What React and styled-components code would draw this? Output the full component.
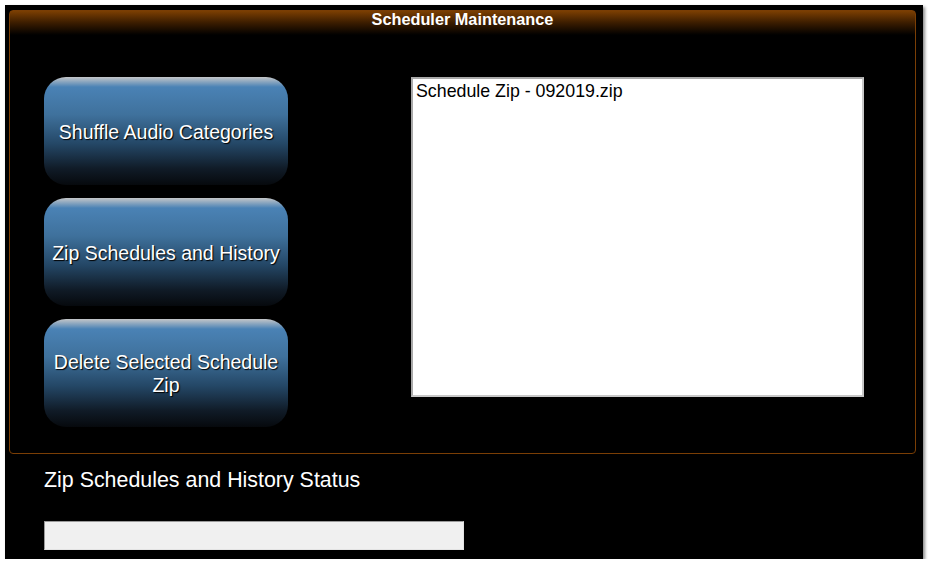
import styled, { createGlobalStyle } from 'styled-components';

const GlobalStyle = createGlobalStyle`
  html, body {
    margin: 0;
    padding: 0;
    background: #ffffff;
    font-family: "Liberation Sans", Arial, sans-serif;
  }
`;

const Window = styled.div`
  margin: 5px 0 0 5px;
  width: 918px;
  height: 554px;
  background: #000;
  box-shadow: 2px 2px 3px rgba(0, 0, 0, 0.45);
  display: flex;
  flex-direction: column;
`;

const GroupBox = styled.section`
  margin: 5px 0 0 4px;
  width: 907px;
  height: 444px;
  box-sizing: border-box;
  border: 1px solid #7a3e05;
  border-radius: 4px;
  background: linear-gradient(#7c3f02 0px, #3a1c00 12px, #000 24px);
  display: flex;
  flex-direction: column;
`;

const Title = styled.h1`
  margin: 0;
  height: 18px;
  text-align: center;
  color: #fff;
  font-size: 16.3px;
  font-weight: bold;
  line-height: 17px;
`;

const Body = styled.div`
  display: flex;
  padding: 48px 0 0 34px;
`;

const ButtonColumn = styled.div`
  display: flex;
  flex-direction: column;
  gap: 13px;
  width: 244px;
`;

const ActionButton = styled.button`
  width: 244px;
  height: 108px;
  border: none;
  border-radius: 22px;
  padding: 2px 4px 0;
  background: linear-gradient(
    #c4c6c8 0px,
    #4a82b5 10px,
    #3f719c 35%,
    #244766 62%,
    #101b27 85%,
    #06090d 100%
  );
  color: #fff;
  font-family: "Liberation Sans", Arial, sans-serif;
  font-size: 19.5px;
  line-height: 23px;
  text-shadow: 1px 1px 1px #000;
  cursor: pointer;
`;

const ListBox = styled.ul`
  list-style: none;
  margin: 0 0 0 123px;
  padding: 1px 3px;
  width: 453px;
  height: 320px;
  box-sizing: border-box;
  background: #fff;
  border: 2px solid #a9a9a9;
  border-right-color: #c8c8c8;
  border-bottom-color: #c8c8c8;
`;

const ListItem = styled.li`
  color: #000;
  font-size: 17.8px;
  line-height: 22px;
`;

const StatusArea = styled.div`
  padding: 14px 0 0 39px;
  display: flex;
  flex-direction: column;
`;

const StatusLabel = styled.div`
  color: #fff;
  font-size: 21.4px;
  line-height: 24px;
`;

const StatusBox = styled.div`
  margin-top: 29px;
  width: 420px;
  height: 29px;
  box-sizing: border-box;
  background: #f0f0f0;
  border: 1px solid #9a9a9a;
  border-right-color: #e3e3e3;
  border-bottom-color: #e3e3e3;
`;

const buttons = [
  'Shuffle Audio Categories',
  'Zip Schedules and History',
  'Delete Selected Schedule Zip',
];

const App = () => {
  return (
    <>
      <GlobalStyle />
      <Window>
        <GroupBox>
          <Title>Scheduler Maintenance</Title>
          <Body>
            <ButtonColumn>
              {buttons.map(label => (
                <ActionButton key={label}>{label}</ActionButton>
              ))}
            </ButtonColumn>
            <ListBox>
              <ListItem>Schedule Zip - 092019.zip</ListItem>
            </ListBox>
          </Body>
        </GroupBox>
        <StatusArea>
          <StatusLabel>Zip Schedules and History Status</StatusLabel>
          <StatusBox />
        </StatusArea>
      </Window>
    </>
  );
};

export default App;
